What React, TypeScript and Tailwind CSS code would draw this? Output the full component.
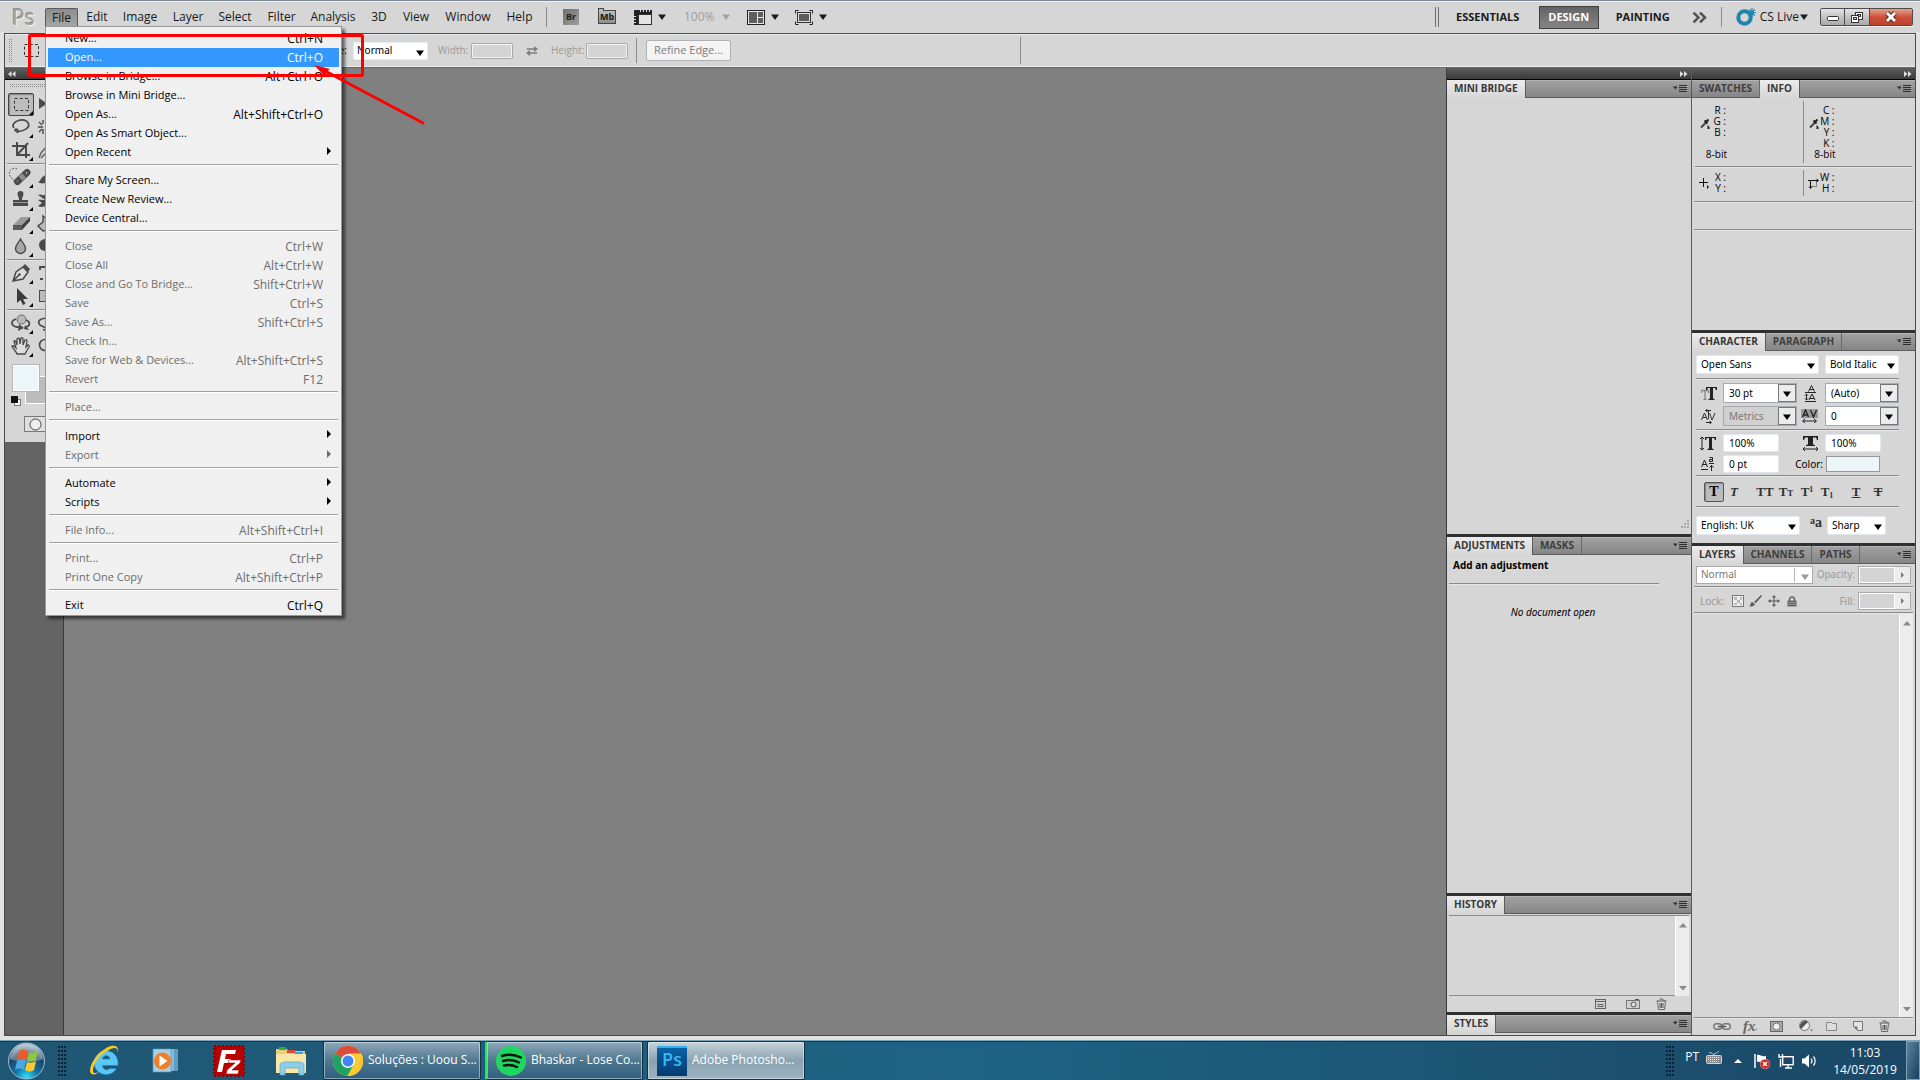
import React from "react";

const UI = "font-['Open_Sans',sans-serif]";
const TAHOMA = "font-['Noto_Sans',sans-serif]";

/* ---------- shared pieces ---------- */

function Caret({ className = "text-[#1c1c1c]" }: { className?: string }) {
  return (
    <svg width="8" height="6" viewBox="0 0 8 6" className={`shrink-0 ${className}`} aria-hidden="true">
      <path d="M0 0.5h8L4 6z" fill="currentColor" />
    </svg>
  );
}

function Rule({ className = "" }: { className?: string }) {
  return <div className={`h-0.5 shrink-0 border-t border-b border-t-[#8a8a8a] border-b-[#e6e6e6] ${className}`} />;
}

function Grip() {
  return (
    <svg width="9" height="32" viewBox="0 0 9 32" aria-hidden="true">
      {Array.from({ length: 8 }, (_, r) =>
        [0, 3, 6].map((x) => <rect key={`${r}-${x}`} x={x} y={r * 4 + 1} width="2" height="2" fill="#0b2233" />),
      )}
    </svg>
  );
}

function PanelTabs({ tabs, active = 0 }: { tabs: string[]; active?: number }) {
  return (
    <div className="flex h-[18px] shrink-0 items-stretch border-b border-[#5c5c5c] bg-linear-to-b from-[#a2a2a2] to-[#868686] shadow-[inset_0_1px_0_#b4b4b4]">
      {tabs.map((t, i) => (
        <button
          key={t}
          type="button"
          className={
            i === active
              ? "-mb-px h-[18px] border-r border-[#5c5c5c] bg-linear-to-b from-[#ececec] to-[#d6d6d6] px-[7px] pb-0.5 text-[10px] leading-4 font-bold whitespace-nowrap text-[#383838]"
              : "h-[17px] border-r border-[#6a6a6a] px-[7px] pb-px text-[10px] leading-4 font-bold whitespace-nowrap text-[#3e3e3e]"
          }
        >
          {t}
        </button>
      ))}
      <button type="button" aria-label="Panel menu" className="mr-1 ml-auto flex items-center">
        <svg width="14" height="9" viewBox="0 0 14 9">
          <path d="M0 2.5h4.6L2.3 5.5z" fill="#2d2d2d" />
          <path d="M6 1.5h8M6 3.5h8M6 5.5h8M6 7.5h8" stroke="#2d2d2d" />
        </svg>
      </button>
    </div>
  );
}

/* ---------- menu bar ---------- */

const MENUS: { label: string; w: string }[] = [
  { label: "Edit", w: "w-[38px]" },
  { label: "Image", w: "w-[48px]" },
  { label: "Layer", w: "w-[48px]" },
  { label: "Select", w: "w-[46px]" },
  { label: "Filter", w: "w-[47px]" },
  { label: "Analysis", w: "w-[56px]" },
  { label: "3D", w: "w-[36px]" },
  { label: "View", w: "w-[38px]" },
  { label: "Window", w: "w-[66px]" },
  { label: "Help", w: "w-[37px]" },
];

type Item = { t: string; k?: string; off?: boolean; sub?: boolean; on?: boolean; tall?: boolean };

const FILE_MENU: Item[][] = [
  [
    { t: "New...", k: "Ctrl+N" },
    { t: "Open...", k: "Ctrl+O", on: true },
    { t: "Browse in Bridge...", k: "Alt+Ctrl+O" },
    { t: "Browse in Mini Bridge..." },
    { t: "Open As...", k: "Alt+Shift+Ctrl+O" },
    { t: "Open As Smart Object..." },
    { t: "Open Recent", sub: true },
  ],
  [{ t: "Share My Screen..." }, { t: "Create New Review..." }, { t: "Device Central..." }],
  [
    { t: "Close", k: "Ctrl+W", off: true },
    { t: "Close All", k: "Alt+Ctrl+W", off: true },
    { t: "Close and Go To Bridge...", k: "Shift+Ctrl+W", off: true },
    { t: "Save", k: "Ctrl+S", off: true },
    { t: "Save As...", k: "Shift+Ctrl+S", off: true },
    { t: "Check In...", off: true },
    { t: "Save for Web & Devices...", k: "Alt+Shift+Ctrl+S", off: true },
    { t: "Revert", k: "F12", off: true },
  ],
  [{ t: "Place...", off: true }],
  [
    { t: "Import", sub: true, tall: true },
    { t: "Export", sub: true, off: true },
  ],
  [
    { t: "Automate", sub: true },
    { t: "Scripts", sub: true },
  ],
  [{ t: "File Info...", k: "Alt+Shift+Ctrl+I", off: true }],
  [
    { t: "Print...", k: "Ctrl+P", off: true },
    { t: "Print One Copy", k: "Alt+Shift+Ctrl+P", off: true },
  ],
  [{ t: "Exit", k: "Ctrl+Q" }],
];

function FileMenu() {
  return (
    <div
      role="menu"
      className={`absolute top-full left-0 z-20 w-[297px] border border-[#979797] bg-[#f0f0f0] px-0.5 pt-0.5 text-[11px] shadow-[3px_3px_3px_rgba(0,0,0,0.55)] ${UI}`}
    >
      {FILE_MENU.map((group, g) => (
        <React.Fragment key={g}>
          {g > 0 && <div className="mx-px mt-0.5 mb-[5px] h-0.5 border-t border-b border-t-[#a0a0a0] border-b-white" />}
          {group.map((it) => (
            <button
              key={it.t}
              type="button"
              role="menuitem"
              disabled={it.off}
              className={`flex w-full items-center pr-4 pl-[17px] text-left ${it.tall ? "h-5" : "h-[19px]"} ${
                it.on ? "bg-[#3399ff] text-white" : it.off ? "text-[#6d6d6d]" : "text-black"
              }`}
            >
              <span>{it.t}</span>
              {it.k && <span className="ml-auto text-[12px]">{it.k}</span>}
              {it.sub && (
                <svg width="4" height="8" viewBox="0 0 4 8" className="-mt-1 -mr-2 ml-auto">
                  <path d="M0 0l4 4-4 4z" fill="currentColor" />
                </svg>
              )}
            </button>
          ))}
        </React.Fragment>
      ))}
    </div>
  );
}

function MenuBar() {
  return (
    <div className="flex h-[30px] shrink-0 items-center">
      <div className="w-[45px] pl-3 text-[21px] leading-[30px] text-[#a3a3a3] [text-shadow:1px_1px_0_#f4f4f4,-1px_-1px_0_#8f8f8f]">Ps</div>
      <nav className="flex text-[12px] text-[#1a1a1a]">
        <div className="relative">
          <button
            type="button"
            aria-haspopup="menu"
            aria-expanded="true"
            className="block h-[18px] w-[33px] rounded-t-xs border border-b-0 border-[#5a5a5a] bg-linear-to-b from-[#8c8c8c] to-[#a6a6a6] leading-[17px]"
          >
            File
          </button>
          <FileMenu />
        </div>
        {MENUS.map((m) => (
          <button key={m.label} type="button" className={`h-[18px] leading-[18px] ${m.w}`}>
            {m.label}
          </button>
        ))}
      </nav>
      <div className="ml-2 h-5 w-px bg-[#8a8a8a]" />
      <button type="button" className="ml-4 h-4 w-4 bg-linear-to-br from-[#6e6e6e] to-[#a0a0a0] text-[9px] leading-4 font-bold text-[#222]">
        Br
      </button>
      <button type="button" className="relative ml-[19px] h-[14px] w-[18px] border border-[#444] bg-linear-to-b from-[#bdbdbd] to-[#8f8f8f] text-[9px] leading-3 font-bold text-[#161616]">
        <span className="absolute -top-[3px] -left-px h-[3px] w-1.5 border border-b-0 border-[#444] bg-[#bdbdbd]" />
        Mb
      </button>
      <button type="button" aria-label="View extras" className="ml-[18px] flex items-center gap-1.5">
        <svg width="18" height="15" viewBox="0 0 18 15">
          <path d="M0 0h18v4H4v11H0z" fill="#222" />
          <rect x="4.5" y="4.5" width="13" height="10" fill="#e4e4e4" stroke="#333" />
          <path d="M6.500 0v2M9.500 0v2M12.500 0v2M15.500 0v2M0 6.500h2M0 9.500h2M0 12.500h2" stroke="#e0e0e0" />
        </svg>
        <Caret />
      </button>
      <button type="button" disabled className="ml-[18px] flex items-center gap-[7px] text-[12px] text-[#9d9d9d]">
        100%
        <Caret className="text-[#a2a2a2]" />
      </button>
      <button type="button" aria-label="Arrange documents" className="ml-[17px] flex items-center gap-1.5">
        <svg width="18" height="15" viewBox="0 0 18 15">
          <rect x="0.5" y="0.5" width="17" height="14" fill="#e6e6e6" stroke="#222" />
          <path d="M2 2h8v11H2zM11 2h5v5h-5zM11 8h5v5h-5z" fill="#5e5e5e" />
        </svg>
        <Caret />
      </button>
      <button type="button" aria-label="Screen mode" className="ml-4 flex items-center gap-1.5">
        <svg width="18" height="15" viewBox="0 0 18 15">
          <path d="M.5 3.500v-3h3M14.500.5h3v3M17.500 11.500v3h-3M3.500 14.500h-3v-3" fill="none" stroke="#222" />
          <rect x="2.500" y="2.500" width="13" height="10" fill="#dedede" stroke="#333" />
          <path d="M4 4h10v7H4z" fill="#5e5e5e" />
        </svg>
        <Caret />
      </button>

      <div className="ml-auto flex items-center pr-[7px]">
        <div className="h-5 w-1 border-x border-[#6f6f6f]" />
        <button type="button" className="ml-[13px] w-[72px] text-[11px] font-bold text-[#1a1a1a]">
          ESSENTIALS
        </button>
        <button type="button" className="ml-[15px] h-[23px] w-[60px] border border-[#3f3f3f] bg-linear-to-b from-[#646464] to-[#858585] text-[11px] leading-5 font-bold text-white">
          DESIGN
        </button>
        <button type="button" className="ml-[14px] w-[60px] text-[11px] font-bold text-[#1a1a1a]">
          PAINTING
        </button>
        <button type="button" aria-label="More workspaces" className="ml-[19px]">
          <svg width="15" height="11" viewBox="0 0 15 11">
            <path d="M1.500.5l5 5-5 5M8 .5l5 5-5 5" fill="none" stroke="#555" strokeWidth="2.500" />
          </svg>
        </button>
        <div className="ml-[14px] h-5 w-px bg-[#8a8a8a]" />
        <button type="button" className="ml-[14px] flex items-center gap-px text-[12px] text-[#1a1a1a]">
          <svg width="21" height="18" viewBox="0 0 21 18" className="mr-0.5">
            <circle cx="8.500" cy="9.500" r="6.200" fill="none" stroke="#2283ab" strokeWidth="4" />
            <path d="M16 0v9M12 4.500h8M13.200 1.500l5.600 6M18.800 1.500l-5.600 6" stroke="#2283ab" strokeWidth="1.200" />
          </svg>
          CS Live
          <Caret />
        </button>
        <div className="ml-3 flex h-[18px] overflow-hidden rounded-xs border border-[#4b4b4b] shadow-[0_1px_0_#f0f0f0]">
          <button type="button" aria-label="Minimize" className="flex w-6 items-center justify-center border-r border-[#4b4b4b] bg-linear-to-b from-[#e4e4e4] via-[#c4c4c4] to-[#a9a9a9]">
            <svg width="12" height="6" viewBox="0 0 12 6" className="mt-1">
              <rect x="0.500" y="0.500" width="11" height="4" rx="1" fill="#fff" stroke="#333" />
            </svg>
          </button>
          <button type="button" aria-label="Restore" className="flex w-[25px] items-center justify-center border-r border-[#4b4b4b] bg-linear-to-b from-[#e4e4e4] via-[#c4c4c4] to-[#a9a9a9]">
            <svg width="12" height="11" viewBox="0 0 12 11">
              <rect x="4.500" y="0.500" width="7" height="7" fill="#fff" stroke="#333" />
              <rect x="6.500" y="2.500" width="3" height="2" fill="#ccc" stroke="#333" />
              <rect x="0.500" y="3.500" width="7" height="7" fill="#fff" stroke="#333" />
              <rect x="2.500" y="5.500" width="3" height="2" fill="#ccc" stroke="#333" />
            </svg>
          </button>
          <button type="button" aria-label="Close" className="flex w-[42px] items-center justify-center bg-linear-to-b from-[#e2a08f] via-[#cf5039] to-[#b9432e]">
            <svg width="14" height="12" viewBox="0 0 14 12">
              <path d="M3 2l8 8M11 2l-8 8" stroke="#4a2a26" strokeWidth="5" />
              <path d="M3 2l8 8M11 2l-8 8" stroke="#fff" strokeWidth="3" />
            </svg>
          </button>
        </div>
      </div>
    </div>
  );
}

/* ---------- options bar ---------- */

function OptionsBar() {
  return (
    <div className="flex h-[35px] shrink-0 items-center border-t border-b border-t-[#4a4a4a] border-b-[#6a6a6a] bg-[#d6d6d6] text-[11px] text-[#9b9b9b] shadow-[inset_0_1px_0_#ececec,inset_0_-1px_0_#ececec]">
      <svg width="4" height="24" viewBox="0 0 4 24" className="ml-1" aria-hidden="true">
        <path d="M.5 0v24M2.500 0v24" stroke="#8c8c8c" strokeDasharray="1 1" />
      </svg>
      <svg width="15" height="13" viewBox="0 0 15 13" className="ml-[11px]" aria-label="Rectangular marquee tool">
        <rect x="0.500" y="0.500" width="14" height="12" fill="none" stroke="#333" strokeDasharray="3 2.200" />
      </svg>
      <label htmlFor="style" className="ml-[272px] w-9 text-right text-black">
        Style:
      </label>
      <div className="relative ml-1.5 w-[75px]">
        <select id="style" className={`block h-[18px] w-full appearance-none rounded-xs border border-[#e8edf4] bg-white pl-[3px] text-[10px] text-black ${TAHOMA}`}>
          <option>Normal</option>
        </select>
        <Caret className="pointer-events-none absolute top-2 right-1 text-black" />
      </div>
      <label htmlFor="ow" className="ml-2.5 w-8 text-[10px]">
        Width:
      </label>
      <input id="ow" disabled className="ml-px h-4 w-[42px] rounded-xs border border-[#a9a9a9] bg-[#d4d4d4] shadow-[inset_0_0_0_1px_#f4f4f4]" />
      <svg width="12" height="10" viewBox="0 0 12 10" className="ml-[13px]" aria-label="Swap width and height">
        <path d="M1 3h8M11 7H3" stroke="#7c7c7c" strokeWidth="1.500" />
        <path d="M8 0l4 3-4 3zM4 4L0 7l4 3z" fill="#7c7c7c" />
      </svg>
      <label htmlFor="oh" className="ml-[13px] w-[34px] text-[10px]">
        Height:
      </label>
      <input id="oh" disabled className="ml-px h-4 w-[42px] rounded-xs border border-[#a9a9a9] bg-[#d4d4d4] shadow-[inset_0_0_0_1px_#f4f4f4]" />
      <div className="ml-2 h-[25px] w-px bg-[#8a8a8a]" />
      <button type="button" className="ml-[9px] h-[21px] w-[85px] rounded-xs border border-[#aeb2b5] bg-[#f4f4f4] pb-0.5 text-[11px] leading-4 text-[#7c7c7c]">
        Refine Edge...
      </button>
      <div className="ml-[289px] h-[27px] w-px bg-[#8a8a8a]" />
    </div>
  );
}

/* ---------- tools ---------- */

const G = "#4a4a4a";

const TOOL_GROUPS: { name: string; art: React.ReactNode; side: React.ReactNode }[][] = [
  [
    {
      name: "Rectangular Marquee",
      art: <rect x="6.500" y="6.500" width="14" height="12" fill="none" stroke="#333" strokeDasharray="3 2.200" />,
      side: <path d="M2 5v11l8-5.500z" fill={G} />,
    },
    {
      name: "Lasso",
      art: <path d="M9 18c2-2 1-4-1-4-2 .5-.5 3 3 2.500 6-1 11-4 9.500-8C19 5 14 4 10.500 5.500 6 7 3.500 10 6 13" fill="none" stroke={G} strokeWidth="1.700" />,
      side: <path d="M1 11h5M6 4v4M2 6l3 3M2 16l3-3M6 13v5" stroke={G} strokeWidth="1.400" />,
    },
    {
      name: "Crop",
      art: <path d="M9 4v13h13M4 8h14v12M9 17L20 5" fill="none" stroke={G} strokeWidth="2" />,
      side: <path d="M2 19l2-5 6-7M4 19l6-6" fill="none" stroke="#666" strokeWidth="1.500" />,
    },
  ],
  [
    {
      name: "Spot Healing Brush",
      art: (
        <>
          <path d="M9 4a5 5 0 0 0-5 9l3 4" fill="none" stroke="#444" strokeDasharray="1.500 1.500" />
          <path d="M9.500 16.500L19 7.500" stroke="#4e4e4e" strokeWidth="7" strokeLinecap="round" />
          <path d="M12.500 13.500L16 10.500" stroke="#909090" strokeWidth="6" />
          <path d="M9 16h.5M18 8h1" stroke="#b5b5b5" strokeWidth="2" />
        </>
      ),
      side: <path d="M1 16c3-1 2-4 6-6l4-4v9c-3 3-7 3-10 1z" fill={G} />,
    },
    {
      name: "Clone Stamp",
      art: (
        <>
          <path d="M12.500 3a3 3 0 0 1 3 3c0 2-1.500 3-1.500 6h6v6H5v-6h6c0-3-1.500-4-1.500-6a3 3 0 0 1 3-3z" fill={G} />
          <path d="M5 14.500h15" stroke="#999" />
        </>
      ),
      side: <path d="M1 6c4-2 4 2 9-1v5c-4 2-5 0-9 1l4 3-4 3c4 2 6 0 9 0v-5" fill={G} />,
    },
    {
      name: "Eraser",
      art: (
        <>
          <path d="M5 14l8-8h9l-8 8z" fill="#9a9a9a" />
          <path d="M5 14h9v5H5z" fill="#5a5a5a" />
          <path d="M14 14l8-8v4l-8 9z" fill="#3e3e3e" />
        </>
      ),
      side: <path d="M6 4v6l-5 4 5 5 5-1V8z" fill="#bbb" stroke={G} strokeWidth="1.500" />,
    },
    {
      name: "Blur",
      art: <path d="M12.500 5c2 4 5 6 5 9.500a5 5 0 0 1-10 0c0-3.500 3-5.500 5-9.500z" fill="#a8a8a8" stroke={G} strokeWidth="1.400" />,
      side: <circle cx="8" cy="10" r="6" fill={G} />,
    },
  ],
  [
    {
      name: "Pen",
      art: (
        <>
          <path d="M5 20l3-9 7-5 5 5-5 7-10 2zM5 20l6-6" fill="#dcdcdc" stroke={G} strokeWidth="1.500" />
          <circle cx="11.500" cy="13.500" r="1.300" fill={G} />
          <path d="M15 5l2-2 5 5-2 3z" fill={G} />
        </>
      ),
      side: <path d="M3 8V5h8M3 17h3M10 5v12" fill="none" stroke={G} strokeWidth="1.800" />,
    },
    {
      name: "Path Selection",
      art: <path d="M9 4v15l3.500-3 2.500 5 2.500-1.300-2.500-4.700h5z" fill="#3a3a3a" />,
      side: <rect x="2.500" y="5.500" width="12" height="11" fill="#bbb" stroke={G} />,
    },
  ],
  [
    {
      name: "3D Object Rotate",
      art: (
        <>
          <path d="M8 8c-6 2-5 7 1 8l4 1M18 9c5 2 4 6 0 7" fill="none" stroke={G} strokeWidth="1.800" />
          <circle cx="13.500" cy="8.500" r="4.500" fill="#b9b9b9" stroke="#666" />
          <path d="M11 13l5 4-6 3zM17 14l-1 4 5 1z" fill={G} />
        </>
      ),
      side: <path d="M11 6C2 6 0 10 3 13l6 3M6 18l5-1" fill="none" stroke={G} strokeWidth="1.700" />,
    },
    {
      name: "Hand",
      art: (
        <path
          d="M9 20c-1-3-4-5-5-8 1-1 2 0 4 2L6 7c1-1 2 0 3 4V5c1-1 2-1 2.500 0l.5 5 1-6c1-1 2 0 2 1v6l2-5c1-1 2 0 2 1l-1 6 2-2c1 0 1.500 1 1 2l-3 5-1 2z"
          fill="#dedede"
          stroke={G}
          strokeWidth="1.300"
        />
      ),
      side: <circle cx="8" cy="10" r="5.500" fill="none" stroke={G} strokeWidth="1.700" />,
    },
  ],
];

function ToolsDock() {
  return (
    <aside className="flex w-[59px] shrink-0 flex-col border-r border-[#3a3a3a] bg-[#646464]">
      <div className="flex h-3 items-center border-b border-black bg-linear-to-b from-[#5e5e5e] to-[#3a3a3a] pl-[3px]">
        <svg width="8" height="6" viewBox="0 0 8 6" aria-label="Collapse">
          <path d="M3.500 0v6L0 3zM7.500 0v6L4 3z" fill="#ddd" />
        </svg>
      </div>
      <div className="bg-[#d6d6d6] pb-2.5">
        <svg width="50" height="4" viewBox="0 0 50 4" className="mt-1 ml-[5px]" aria-hidden="true">
          <path d="M0 .5h50M0 2.500h50" stroke="#8c8c8c" strokeDasharray="1 1" />
        </svg>
        <div className="mt-[5px]">
          {TOOL_GROUPS.map((group, g) => (
            <div key={g}>
              {g > 0 && <Rule className="mx-0.5 my-px" />}
              {group.map((tool, i) => (
                <div key={tool.name} className="flex h-[23px]">
                  <button
                    type="button"
                    aria-label={tool.name}
                    className={`ml-[3px] flex h-[23px] w-[26px] items-center justify-center ${
                      g === 0 && i === 0 ? "rounded-xs border border-[#444] bg-[#bdbdbd] shadow-[inset_1px_1px_1px_#888]" : ""
                    }`}
                  >
                    <svg width="26" height="23" viewBox="0 0 26 23" className="shrink-0">
                      <g transform="translate(0 -1)">{tool.art}</g>
                      <path d="M25 18v4h-4z" fill="#000" />
                    </svg>
                  </button>
                  <svg width="20" height="23" viewBox="0 0 20 23" className="ml-[3px]">
                    {tool.side}
                  </svg>
                </div>
              ))}
            </div>
          ))}
        </div>
        <div className="relative mt-1.5 ml-1.5 h-[46px] w-[50px]">
          <div className="absolute top-3 left-3.5 h-7 w-9 border border-white bg-[#bcbcbc]" />
          <button type="button" aria-label="Foreground color" className="absolute top-0 left-px size-7 border border-[#b5b5b5] bg-[#ecf5f8] shadow-[inset_0_0_0_1px_#fff]" />
          <svg width="10" height="10" viewBox="0 0 10 10" className="absolute top-8 left-0" aria-label="Default colors">
            <rect x="3.500" y="3.500" width="6" height="6" fill="#fff" stroke="#777" />
            <path d="M0 0h7v7H0z" fill="#111" />
          </svg>
        </div>
        <button type="button" aria-label="Quick mask" className="mt-1.5 ml-[19px] flex h-4 w-8 items-center border border-[#7a7a7a] bg-[#dedede] pl-1">
          <svg width="13" height="13" viewBox="0 0 13 13">
            <circle cx="6.500" cy="6.500" r="5.500" fill="#eee" stroke="#444" />
          </svg>
        </button>
      </div>
    </aside>
  );
}

/* ---------- right docks ---------- */

function DockHandle() {
  return (
    <div className="flex h-3 shrink-0 items-center justify-end border-b border-black bg-linear-to-b from-[#5e5e5e] to-[#3a3a3a] pr-[3px]">
      <svg width="8" height="6" viewBox="0 0 8 6" aria-label="Collapse">
        <path d="M0 0v6l3.500-3zM4 0v6l3.500-3z" fill="#ddd" />
      </svg>
    </div>
  );
}

function ScrollBar() {
  return (
    <div className="flex w-3.5 shrink-0 flex-col items-center justify-between border-l border-white bg-[#ececec] pt-[7px] pb-[5px]">
      <svg width="8" height="5" viewBox="0 0 8 5" aria-hidden="true">
        <path d="M4 0l4 4.500H0z" fill="#8a8a8a" />
      </svg>
      <svg width="8" height="5" viewBox="0 0 8 5" aria-hidden="true">
        <path d="M4 4.500L8 0H0z" fill="#8a8a8a" />
      </svg>
    </div>
  );
}

function Trash() {
  return (
    <svg width="11" height="12" viewBox="0 0 11 12">
      <path d="M1.500 3.500l1 8h6l1-8" fill="#ddd" stroke="#666" />
      <path d="M.5 3h10M3.500 1h3l2 2M4 5v5M5.500 5v5M7 5v5" fill="none" stroke="#555" />
    </svg>
  );
}

const BAR = "border-t-[3px] border-[#303030]";

function MiddleDock() {
  return (
    <div className="flex w-[245px] shrink-0 flex-col border-l border-[#3a3a3a] bg-[#d6d6d6]">
      <DockHandle />
      <section className="flex h-[454px] shrink-0 flex-col">
        <PanelTabs tabs={["MINI BRIDGE"]} />
        <svg width="10" height="10" viewBox="0 0 10 10" className="mt-auto mr-0.5 mb-1 ml-auto" aria-hidden="true">
          <path d="M8 1h2M5 4h2M8 4h2M2 7h2M5 7h2M8 7h2" stroke="#999" strokeWidth="1.500" />
        </svg>
      </section>
      <section className={`flex flex-1 flex-col ${BAR}`}>
        <PanelTabs tabs={["ADJUSTMENTS", "MASKS"]} />
        <h2 className="mt-0.5 ml-1.5 text-[10px] leading-4 font-bold text-black">Add an adjustment</h2>
        <Rule className="mt-2.5 mr-8 ml-0.5" />
        <p className={`mt-[19px] mr-8 text-center text-[10px] leading-4 text-black italic ${TAHOMA}`}>No document open</p>
      </section>
      <section className={`flex h-[119px] shrink-0 flex-col ${BAR}`}>
        <PanelTabs tabs={["HISTORY"]} />
        <div className="mx-0.5 mt-px flex flex-1 border-t border-[#8a8a8a]">
          <div className="flex-1 border-b border-[#8a8a8a]" />
          <ScrollBar />
        </div>
        <div className="flex h-4 items-center justify-end pr-6">
          <button type="button" aria-label="New document from state">
            <svg width="11" height="10" viewBox="0 0 11 10">
              <rect x="0.500" y="0.500" width="10" height="9" fill="#d0d0d0" stroke="#666" />
              <path d="M1 2.500h9M3 5.500h5v2H3z" fill="none" stroke="#666" />
            </svg>
          </button>
          <button type="button" aria-label="New snapshot" className="ml-5">
            <svg width="14" height="10" viewBox="0 0 14 10">
              <rect x="0.500" y="1.500" width="13" height="8" fill="#d0d0d0" stroke="#777" />
              <circle cx="7.500" cy="5.500" r="2.500" fill="#ddd" stroke="#555" />
              <path d="M9 .5h4" stroke="#555" />
            </svg>
          </button>
          <button type="button" aria-label="Delete state" className="ml-4">
            <Trash />
          </button>
        </div>
      </section>
      <section className={`h-[23px] shrink-0 ${BAR}`}>
        <PanelTabs tabs={["STYLES"]} />
      </section>
    </div>
  );
}

function Letters({ rows }: { rows: string[] }) {
  return (
    <div className="w-[31px] text-right text-[10px] leading-[11px] whitespace-pre text-black">
      {rows.map((r, i) => (
        <div key={i}>{r ? `${r} :` : " "}</div>
      ))}
    </div>
  );
}

function Dropper() {
  return (
    <svg width="10" height="11" viewBox="0 0 10 11" aria-hidden="true">
      <path d="M1 9.500l5-5" stroke="#444" strokeWidth="2" />
      <path d="M4.500 2.500l3 3M6 4l2.500-2.500" stroke="#222" strokeWidth="2" />
      <path d="M7.500 7v4h2V9z" fill="#222" />
    </svg>
  );
}

function InfoPanel() {
  return (
    <section className="flex h-[250px] shrink-0 flex-col">
      <PanelTabs tabs={["SWATCHES", "INFO"]} active={1} />
      <div className="mx-[3px] mt-[3px] grid grid-cols-2">
        <div className="relative h-[62px] border-r border-[#8a8a8a] pt-1">
          <Letters rows={["R", "G", "B", ""]} />
          <div className="w-8 text-right text-[10px] leading-[11px] text-black">8-bit</div>
          <div className="absolute top-[17px] left-[5px]">
            <Dropper />
          </div>
        </div>
        <div className="relative h-[62px] pt-1">
          <Letters rows={["C", "M", "Y", "K"]} />
          <div className="w-8 text-right text-[10px] leading-[11px] text-black">8-bit</div>
          <div className="absolute top-[17px] left-[5px]">
            <Dropper />
          </div>
        </div>
      </div>
      <Rule className="mx-[3px] mt-[3px]" />
      <div className="mx-[3px] mt-0.5 grid grid-cols-2">
        <div className="relative h-[26px] border-r border-[#8a8a8a] pt-0.5">
          <Letters rows={["X", "Y"]} />
          <svg width="11" height="11" viewBox="0 0 11 11" className="absolute top-2 left-1" aria-hidden="true">
            <path d="M4.500 0v9M0 4.500h9" stroke="#111" />
            <path d="M8 7v4l2-2z" fill="#111" />
          </svg>
        </div>
        <div className="relative h-[26px] pt-0.5">
          <Letters rows={["W", "H"]} />
          <svg width="11" height="11" viewBox="0 0 11 11" className="absolute top-2 left-1" aria-hidden="true">
            <path d="M2.500 10V2.500H10M0 2.500h2M1 8.500l1.500 2L4 8.500M8.500 1l2 1.500-2 1.500" fill="none" stroke="#111" />
            <path d="M2.500 8.500h6v-6" fill="none" stroke="#333" strokeDasharray="1 1" />
          </svg>
        </div>
      </div>
      <Rule className="mx-0.5 mt-[5px]" />
      <Rule className="mx-0.5 mt-[26px]" />
    </section>
  );
}

function PlainSelect({ label, value, w }: { label: string; value: string; w: string }) {
  return (
    <div className={`relative ${w}`}>
      <select aria-label={label} className={`block h-[19px] w-full appearance-none rounded-xs border border-[#e3e8f0] bg-white pb-px pl-1 text-[10px] text-black ${TAHOMA}`}>
        <option>{value}</option>
      </select>
      <Caret className="pointer-events-none absolute top-2 right-1 text-black" />
    </div>
  );
}

function Combo({ label, value, disabled }: { label: string; value: string; disabled?: boolean }) {
  return (
    <div className="flex h-5 w-[74px] border border-[#a6a9b2]">
      <input
        aria-label={label}
        defaultValue={value}
        disabled={disabled}
        className={`w-0 flex-1 pl-[5px] text-[10px] ${TAHOMA} ${disabled ? "bg-[#d0d0d0] text-[#7a7a7a]" : "bg-white text-black"}`}
      />
      <button type="button" aria-label={`${label} options`} className="flex w-[18px] items-center justify-center border border-[#777] bg-[#ececec] pt-0.5">
        <Caret className="text-black" />
      </button>
    </div>
  );
}

function Field({ label, value }: { label: string; value: string }) {
  return (
    <input
      aria-label={label}
      defaultValue={value}
      className={`h-[18px] w-14 rounded-xs border border-[#e3e8f0] bg-white pl-[5px] text-[10px] text-black ${TAHOMA}`}
    />
  );
}

const SERIF = "font-['Liberation_Serif',serif] font-bold text-[#333]";

function CharacterPanel() {
  return (
    <section className={`flex h-[213px] shrink-0 flex-col ${BAR}`}>
      <PanelTabs tabs={["CHARACTER", "PARAGRAPH"]} />
      <div className="w-[207px] pl-1">
        <div className="mt-1 flex justify-between">
          <PlainSelect label="Font family" value="Open Sans" w="w-[123px]" />
          <PlainSelect label="Font style" value="Bold Italic" w="w-[74px]" />
        </div>
        <Rule className="mt-1" />
        <div className="mt-[3px] grid grid-cols-[27px_74px_28px_74px] items-center gap-y-[3px]">
          <svg width="16" height="14" viewBox="0 0 16 14" className="ml-[5px]" aria-hidden="true">
            <path d="M0 4.500h8M.5 4v3M7.500 4v3M4 5v8.500M2.500 13.500h3" stroke="#888" strokeWidth="1.300" />
            <path d="M5 1h11v3h-1l-1-2h-2v10.500l1.500.5v1h-6v-1l1.500-.5V2H7L6 4H5z" fill="#222" />
          </svg>
          <Combo label="Font size" value="30 pt" />
          <svg width="13" height="17" viewBox="0 0 13 17" className="ml-[7px]" aria-hidden="true">
            <path d="M4.500 6.500L7.500.5l3 6M5.500 4.500h4M5 15l3-6 3 6M6 13.500h4M1 7.500h11M1 16.500h11M2.500 9v6M1 10.500L2.500 9 4 10.500M1 13.500L2.500 15 4 13.500" fill="none" stroke="#222" />
          </svg>
          <Combo label="Leading" value="(Auto)" />
          <svg width="15" height="15" viewBox="0 0 15 15" className="ml-[5px]" aria-hidden="true">
            <path d="M.5 11L3.500 4l3 7M1.500 8.500h4M8.500 4l2.500 7 3-7M7.500 2v8" fill="none" stroke="#333" />
            <path d="M5 1.500h5M5 13.500h5M8.500 12l2 1.500-2 1.500M6.500 0l-2 1.500 2 1.500" fill="none" stroke="#222" />
          </svg>
          <Combo label="Kerning" value="Metrics" disabled />
          <svg width="17" height="14" viewBox="0 0 17 14" className="ml-1" aria-hidden="true">
            <path d="M0 0h17v9H0z" fill="#9a9a9a" />
            <path d="M1.500 8L4.500 1l3 7M2.500 6h4M9.500 1l3 7 3-7" fill="none" stroke="#222" strokeWidth="1.300" />
            <path d="M2 12h13M4 10l-2.500 2L4 14M13 10l2.500 2-2.500 2" fill="none" stroke="#222" />
          </svg>
          <Combo label="Tracking" value="0" />
        </div>
        <Rule className="mt-[3px]" />
        <div className="mt-[3px] grid grid-cols-[27px_56px_46px_74px] items-center gap-y-[3px]">
          <svg width="16" height="15" viewBox="0 0 16 15" className="ml-1" aria-hidden="true">
            <path d="M2 1v13M0 3l2-2 2 2M0 12l2 2 2-2" fill="none" stroke="#222" />
            <path d="M5 1h11v3h-1l-1-2h-2v10.500l1.500.5v1h-6v-1l1.500-.5V2H7L6 4H5z" fill="#222" />
          </svg>
          <Field label="Vertical scale" value="100%" />
          <svg width="17" height="15" viewBox="0 0 17 15" className="ml-[23px]" aria-hidden="true">
            <path d="M1 0h15v4h-1l-1-2.500h-3v7l2 .5v1H4V9l2-.5v-7H3L2 4H1z" fill="#222" />
            <path d="M1 13h15M3 11l-2 2 2 2M14 11l2 2-2 2" fill="none" stroke="#222" />
          </svg>
          <Field label="Horizontal scale" value="100%" />
          <svg width="15" height="14" viewBox="0 0 15 14" className="ml-[5px]" aria-hidden="true">
            <path d="M.5 10L3.500 3l3 7M1.500 7.500h4M0 12.500h7M8 6.500h5M10.500 14V8.500M8.500 10.500l2-2 2 2" fill="none" stroke="#222" />
            <path d="M8.500.5h3v4h-3v-2h3" fill="none" stroke="#222" />
          </svg>
          <Field label="Baseline shift" value="0 pt" />
          <span className={`pr-0.5 text-right text-[10px] text-black ${TAHOMA}`}>Color:</span>
          <button type="button" aria-label="Text color" className="ml-px h-4 w-[54px] border border-[#999] bg-[#ecf5f8]" />
        </div>
        <Rule className="mt-0.5" />
        <div className={`mt-[5px] flex h-5 items-center text-[13px] ${SERIF}`}>
          <button type="button" aria-label="Faux bold" className="ml-2 h-5 w-5 rounded-xs border border-[#555] bg-[#bcbcbc] text-[14px] leading-[18px] text-black shadow-[inset_1px_1px_1px_#888]">
            T
          </button>
          <button type="button" aria-label="Faux italic" className="ml-1 w-3 italic">
            T
          </button>
          <button type="button" aria-label="All caps" className="ml-4 w-[18px]">
            TT
          </button>
          <button type="button" aria-label="Small caps" className="ml-1 w-4">
            T<span className="text-[9px]">T</span>
          </button>
          <button type="button" aria-label="Superscript" className="ml-1.5 w-3.5">
            T<sup className="text-[8px]">1</sup>
          </button>
          <button type="button" aria-label="Subscript" className="ml-1.5 w-3.5">
            T<sub className="text-[8px]">1</sub>
          </button>
          <button type="button" aria-label="Underline" className="ml-4 w-3 underline">
            T
          </button>
          <button type="button" aria-label="Strikethrough" className="ml-2.5 w-3 line-through">
            T
          </button>
        </div>
        <Rule className="mt-1" />
        <div className="mt-2 flex">
          <PlainSelect label="Language" value="English: UK" w="w-[104px]" />
          <div className={`ml-2.5 flex w-[17px] items-start leading-4 ${SERIF}`}>
            <span className="text-[10px] leading-2.5">a</span>
            <span className="text-[14px] leading-3.5">a</span>
          </div>
          <PlainSelect label="Anti-aliasing" value="Sharp" w="w-[59px]" />
        </div>
      </div>
    </section>
  );
}

function Stepper({ label, name }: { label: string; name: string }) {
  return (
    <div className="ml-auto flex items-center">
      <label htmlFor={name} className={`mr-[3px] text-[10px] text-[#9b9b9b] ${TAHOMA}`}>
        {label}
      </label>
      <div className="flex h-[18px] w-[53px] border border-[#a9a9ae]">
        <input id={name} disabled className="w-0 flex-1 border border-white bg-[#d4d4d4]" />
        <button type="button" disabled aria-label={`${label} slider`} className="flex w-[15px] items-center justify-center bg-[#ececec]">
          <svg width="3" height="6" viewBox="0 0 3 6">
            <path d="M0 0l3 3-3 3z" fill="#777" />
          </svg>
        </button>
      </div>
    </div>
  );
}

function LayersPanel() {
  return (
    <section className={`flex flex-1 flex-col ${BAR}`}>
      <PanelTabs tabs={["LAYERS", "CHANNELS", "PATHS"]} />
      <div className="mt-px mr-1 ml-1 flex h-[19px] items-center">
        <div className="relative w-[117px]">
          <select aria-label="Blend mode" disabled className={`block h-[18px] w-full appearance-none border border-[#a9a9ae] bg-white pl-1 text-[10px] text-[#777] ${TAHOMA}`}>
            <option>Normal</option>
          </select>
          <div className="pointer-events-none absolute top-0.5 right-[18px] h-3.5 w-px bg-[#b4b4b4]" />
          <Caret className="pointer-events-none absolute top-2 right-1 text-[#9a9a9a]" />
        </div>
        <Stepper label="Opacity:" name="opacity" />
      </div>
      <Rule className="mx-0.5 mt-0.5" />
      <div className="mt-1 mr-1 ml-2 flex h-[18px] items-center">
        <span className={`w-[31px] text-[10px] text-[#9b9b9b] ${TAHOMA}`}>Lock:</span>
        <button type="button" disabled aria-label="Lock transparent pixels" className="ml-px">
          <svg width="12" height="12" viewBox="0 0 12 12">
            <rect x="0.500" y="0.500" width="11" height="11" fill="#eee" stroke="#777" />
            <path d="M2 2h3v3H2zM5 5h3v3H5zM8 2h2v3H8zM2 8h3v2H2zM8 8h2v2H8z" fill="#bbb" />
          </svg>
        </button>
        <button type="button" disabled aria-label="Lock image pixels" className="ml-[5px]">
          <svg width="13" height="12" viewBox="0 0 13 12">
            <path d="M0 11c2 0 1-3 3-4l3 2c-1 2-3 3-6 2zM5 7l7-7 1 1-6 7z" fill="#5c5c5c" />
          </svg>
        </button>
        <button type="button" disabled aria-label="Lock position" className="ml-1.5">
          <svg width="12" height="12" viewBox="0 0 12 12">
            <path d="M6 1v10M1 6h10" stroke="#555" />
            <path d="M6 0l2 2.500H4zM6 12l2-2.500H4zM0 6l2.500-2v4zM12 6L9.500 4v4z" fill="#555" />
          </svg>
        </button>
        <button type="button" disabled aria-label="Lock all" className="ml-[7px]">
          <svg width="10" height="11" viewBox="0 0 10 11">
            <path d="M2.500 5V3.500a2.500 2.500 0 0 1 5 0V5" fill="none" stroke="#666" strokeWidth="1.500" />
            <path d="M.5 4.500h9v6h-9z" fill="#666" />
            <path d="M1 6.500h8M1 8.500h8" stroke="#909090" />
          </svg>
        </button>
        <Stepper label="Fill:" name="fill" />
      </div>
      <Rule className="mx-0.5 mt-0.5" />
      <div className="mx-0.5 flex flex-1">
        <div className="flex-1" />
        <ScrollBar />
      </div>
      <Rule className="mx-0.5" />
      <div className="flex h-4 items-center gap-4 pr-6 pb-0.5 pl-[21px]">
        <button type="button" aria-label="Link layers">
          <svg width="18" height="7" viewBox="0 0 18 7">
            <rect x="0.700" y="0.700" width="8" height="5.500" rx="2.700" fill="none" stroke="#777" strokeWidth="1.400" />
            <rect x="9.300" y="0.700" width="8" height="5.500" rx="2.700" fill="none" stroke="#777" strokeWidth="1.400" />
            <path d="M5 3.500h8" stroke="#555" strokeWidth="1.500" />
          </svg>
        </button>
        <button type="button" aria-label="Layer style" className="-mx-1 flex items-end font-['Liberation_Serif',serif] text-[15px] leading-4 font-bold text-[#666] italic">
          fx<span className="text-[8px] leading-3">.</span>
        </button>
        <button type="button" aria-label="Add mask">
          <svg width="13" height="11" viewBox="0 0 13 11">
            <rect x="0.500" y="0.500" width="12" height="10" fill="#aaa" stroke="#666" />
            <circle cx="6.500" cy="5.500" r="3.500" fill="#eee" stroke="#777" />
          </svg>
        </button>
        <button type="button" aria-label="New adjustment layer">
          <svg width="14" height="12" viewBox="0 0 14 12">
            <circle cx="5.500" cy="5.500" r="5" fill="#eee" stroke="#777" />
            <path d="M9 2A5 5 0 0 0 2 9z" fill="#555" />
            <path d="M11 9.500h3l-1.500 2z" fill="#777" />
          </svg>
        </button>
        <button type="button" aria-label="New group" className="-ml-[3px]">
          <svg width="11" height="9" viewBox="0 0 11 9">
            <path d="M.5 8.500v-8h5l1 1h4v7z" fill="#ddd" stroke="#888" />
          </svg>
        </button>
        <button type="button" aria-label="New layer">
          <svg width="10" height="10" viewBox="0 0 10 10">
            <path d="M.5.500h9v9h-5l-4-4z" fill="#e4e4e4" stroke="#777" />
            <path d="M.5 5.500h4v4z" fill="#777" />
          </svg>
        </button>
        <button type="button" aria-label="Delete layer">
          <Trash />
        </button>
      </div>
    </section>
  );
}

function RightDock() {
  return (
    <div className="flex w-[224px] shrink-0 flex-col border-l border-[#5a5a5a] bg-[#d6d6d6]">
      <DockHandle />
      <InfoPanel />
      <CharacterPanel />
      <LayersPanel />
    </div>
  );
}

/* ---------- annotation ---------- */

function Callout() {
  return (
    <div className="pointer-events-none absolute top-[34px] left-7 z-30 h-[43px] w-[336px] rounded-xs border-[3px] border-[#ff0000]">
      <svg width="120" height="70" viewBox="0 0 120 70" className="absolute top-6 left-[280px]">
        <path d="M112 62L16 11" stroke="#ff0000" strokeWidth="3" strokeLinecap="round" />
        <path d="M3 4l16 4-4 3.500v5z" fill="#ff0000" />
      </svg>
    </div>
  );
}

/* ---------- taskbar ---------- */

function TaskButton({ title, tone, icon }: { title: string; tone: string; icon: React.ReactNode }) {
  return (
    <button
      type="button"
      className={`flex h-[39px] w-[158px] items-center rounded-xs border border-[#12303f] pl-[9px] text-[12px] text-white shadow-[inset_0_0_0_1px_rgba(255,255,255,0.45)] ${tone}`}
    >
      {icon}
      <span className="ml-[5px] truncate pb-0.5">{title}</span>
    </button>
  );
}

function Taskbar() {
  return (
    <footer className="flex h-10 shrink-0 items-center border-t border-[#7fa3b8] bg-linear-to-r from-[#1f5673] via-[#1d6384] to-[#1b4766] text-white shadow-[inset_0_1px_0_#123a50]">
      <button type="button" aria-label="Start" className="ml-[7px]">
        <svg width="39" height="38" viewBox="0 0 39 38">
          <defs>
            <radialGradient id="orb" cx="50%" cy="95%" r="90%">
              <stop offset="0" stopColor="#2fe3ff" />
              <stop offset="0.350" stopColor="#1273a8" />
              <stop offset="0.700" stopColor="#1b4465" />
              <stop offset="1" stopColor="#9fb7c6" />
            </radialGradient>
          </defs>
          <circle cx="19.500" cy="19" r="18" fill="url(#orb)" stroke="#9dbccc" />
          <path d="M3 17C5 7 12 2 19.500 2S34 7 36 17c-9 4-23 4-33 0z" fill="#fff" opacity="0.300" />
          <path d="M12 9c3-2 6-2 9 0l-2 9c-3-2-6-2-9 0z" fill="#f0592a" />
          <path d="M22 10c3 1 6 1 9-1l-2 9c-3 2-6 2-9 0z" fill="#8cc63f" />
          <path d="M10 19c3-2 6-2 9 0l-2 9c-3-2-6-2-9 0z" fill="#4aa7e0" />
          <path d="M20 20c3 1 6 1 9-1l-2 9c-3 2-6 2-9 0z" fill="#ffc92b" />
        </svg>
      </button>
      <div className="ml-3">
        <Grip />
      </div>
      <button type="button" aria-label="Internet Explorer" className="ml-[22px]">
        <svg width="32" height="32" viewBox="0 0 32 32">
          <path
            d="M29 17a12 12 0 1 0-1.500 6.500h-7c-2 2.500-6.500 1.500-7-3H29zM13.500 14c.5-4.500 7-4.500 7.500 0z"
            fill="#5ac8f5"
            stroke="#1a83c4"
            strokeWidth="0.700"
          />
          <path d="M28 9c2-7-3-7-8-4C11 9 4 19 4 26c0 2 2 3 5 1-3 4-8 3-8-1C1 18 9 7 19 2c7-3 12-1 9 7z" fill="#fbc926" />
        </svg>
      </button>
      <button type="button" aria-label="Windows Media Player" className="ml-[31px]">
        <svg width="27" height="25" viewBox="0 0 27 25">
          <path d="M6 1h20v22H6z" fill="#5d9cc4" />
          <path d="M3 1h19v22H3z" fill="#86bbdc" />
          <path d="M1 1h18v23H1z" fill="#a9cfe6" stroke="#5b93b8" strokeWidth="0.700" />
          <circle cx="10.500" cy="13" r="8.500" fill="#f08025" />
          <path d="M7.500 7.500v11l8-5.500z" fill="#fff" />
        </svg>
      </button>
      <button type="button" aria-label="FileZilla" className="ml-[34px]">
        <svg width="32" height="32" viewBox="0 0 32 32">
          <rect x="1" y="1" width="30" height="30" fill="#b80000" stroke="#8c0000" strokeWidth="2" strokeDasharray="2 2" />
          <path d="M9 5h14l-1 4h-9l-1 5h6l-1 4h-6l-2 9H4L8 9z" fill="#fff" />
          <path d="M16 15h12l-1 3-8 7h7l-1 4H13l1-4 8-7h-7z" fill="#fff" stroke="#b80000" strokeWidth="0.600" />
        </svg>
      </button>
      <button type="button" aria-label="Windows Explorer" className="ml-[30px]">
        <svg width="32" height="30" viewBox="0 0 32 30">
          <path d="M1 3h11l2 2h16v22H1z" fill="#e9cf78" />
          <path d="M4 1h7v3H4z" fill="#2fae3f" />
          <path d="M12 4h8v3h-8z" fill="#d94b36" />
          <path d="M20 6h8v3h-8z" fill="#3d9be0" />
          <path d="M1 8h30v19H1z" fill="#f8e7a6" />
          <path d="M5 29V20c0-3 2-4 5-4h14c3 0 5 1 5 4v9h-5v-7H10v7z" fill="#8ccdea" stroke="#5aa7cc" strokeWidth="0.700" />
        </svg>
      </button>
      <div className="ml-4 flex gap-1">
        <TaskButton
          title="Soluções : Uoou S..."
          tone="bg-linear-to-b from-[#8fa9b8] via-[#4f7891] to-[#2f5f7f]"
          icon={
            <svg width="30" height="30" viewBox="0 0 30 30" className="shrink-0">
              <circle cx="15" cy="15" r="15" fill="#fcc934" />
              <path d="M15 15L2 7.500A15 15 0 0 1 28 7.500H15z" fill="#dd4b3e" />
              <path d="M2 7.500A15 15 0 0 0 14.500 30L21 18.500 15 15z" fill="#1ea362" />
              <path d="M15 8h13.400A15 15 0 0 1 14.500 30l6.500-11.500z" fill="#fcc934" />
              <circle cx="15" cy="15" r="7" fill="#fff" />
              <circle cx="15" cy="15" r="5.500" fill="#4285f4" />
            </svg>
          }
        />
        <TaskButton
          title="Bhaskar - Lose Co..."
          tone="border-l-2 border-l-[#21e84b] bg-linear-to-b from-[#8fa9b8] via-[#4f7891] to-[#2f5f7f]"
          icon={
            <svg width="30" height="30" viewBox="0 0 30 30" className="shrink-0">
              <circle cx="15" cy="15" r="15" fill="#1ed760" />
              <path d="M6 10c6-2 13-1.500 19 1.500M7 15c5-1.500 11-1 16 1.500M8 19.500c5-1 9-.5 13 1.500" fill="none" stroke="#111" strokeWidth="2.400" strokeLinecap="round" />
            </svg>
          }
        />
        <TaskButton
          title="Adobe Photosho..."
          tone="bg-linear-to-b from-[#c8d3da] via-[#8aa3b2] to-[#9db3c0]"
          icon={
            <span className="flex size-[30px] shrink-0 items-center justify-center border-t-2 border-[#31b2ea] bg-linear-to-b from-[#0a62a8] to-[#063a70] pb-1 text-[18px] font-semibold text-[#35b9f1]">
              Ps
            </span>
          }
        />
      </div>

      <div className="ml-auto flex h-full items-center">
        <Grip />
        <span className="-mt-2 ml-2.5 text-[12px]">PT</span>
        <button type="button" aria-label="Keyboard layout" className="-mt-2 ml-[7px]">
          <svg width="16" height="14" viewBox="0 0 16 14">
            <path d="M8 5c0-3 2-1 4-3l1-1M8 5C6 3 4 2 3 3" fill="none" stroke="#c4c4c4" />
            <rect x="0.500" y="5.500" width="15" height="8" rx="1" fill="#8d8d8d" stroke="#d5d5d5" />
            <path d="M2 7.500h12M2 9.500h12M4 11.500h8" stroke="#eee" strokeDasharray="1 1" />
          </svg>
        </button>
        <button type="button" aria-label="Show hidden icons" className="ml-3">
          <svg width="8" height="4" viewBox="0 0 8 4">
            <path d="M0 4h8L4 0z" fill="#fff" />
          </svg>
        </button>
        <button type="button" aria-label="Action center" className="ml-3">
          <svg width="16" height="16" viewBox="0 0 16 16">
            <path d="M1 1v14" stroke="#fff" strokeWidth="1.500" />
            <path d="M3 2c3-1 4 2 9 1v6c-4 1-6-1-9 0z" fill="#fff" />
            <circle cx="11" cy="11" r="4.800" fill="#d8201b" stroke="#f6b8b0" strokeWidth="0.600" />
            <path d="M9 9l4 4M13 9l-4 4" stroke="#fff" strokeWidth="1.500" />
          </svg>
        </button>
        <button type="button" aria-label="Network" className="ml-2">
          <svg width="16" height="16" viewBox="0 0 16 16">
            <rect x="4.700" y="3.700" width="10.500" height="8" fill="#1d4562" stroke="#fff" strokeWidth="1.400" />
            <path d="M7 15h7M10 12v3M2.500 6v8M1 1v3h3.500V1" fill="none" stroke="#fff" strokeWidth="1.400" />
          </svg>
        </button>
        <button type="button" aria-label="Volume" className="ml-2">
          <svg width="15" height="14" viewBox="0 0 15 14">
            <path d="M0 4.500h2.500L7 .5v13L2.500 9.500H0z" fill="#fff" />
            <path d="M9 4.500c1.200 1.500 1.200 3.500 0 5M11.500 2.500c2.200 2.500 2.200 6.500 0 9" fill="none" stroke="#fff" strokeWidth="1.200" />
          </svg>
        </button>
        <div className="ml-4 w-16 text-center text-[12px] leading-[17px]">
          11:03
          <br />
          14/05/2019
        </div>
        <button type="button" aria-label="Show desktop" className="ml-[9px] h-full w-[14px] border border-[#7fa0b5] bg-linear-to-br from-[#5b87a3] to-[#173f5c]" />
      </div>
    </footer>
  );
}

export default function App() {
  return (
    <div className={`relative flex h-screen min-h-[900px] flex-col bg-[#d6d6d6] ${UI}`}>
      <div className="h-px shrink-0 bg-[#7c8796]" />
      <div className="h-px shrink-0 bg-[#eef0f4]" />
      <MenuBar />
      <div className="flex min-h-0 flex-1 flex-col border-x-4 border-b-4 border-[#e2e2e2] pt-px">
        <div className="flex min-h-0 flex-1 flex-col border-x border-b border-[#4a4a4a]">
          <OptionsBar />
          <div className="flex min-h-0 flex-1">
            <ToolsDock />
            <main className="flex-1 bg-[#808080]" />
            <MiddleDock />
            <RightDock />
          </div>
        </div>
      </div>
      <Taskbar />
      <Callout />
    </div>
  );
}
